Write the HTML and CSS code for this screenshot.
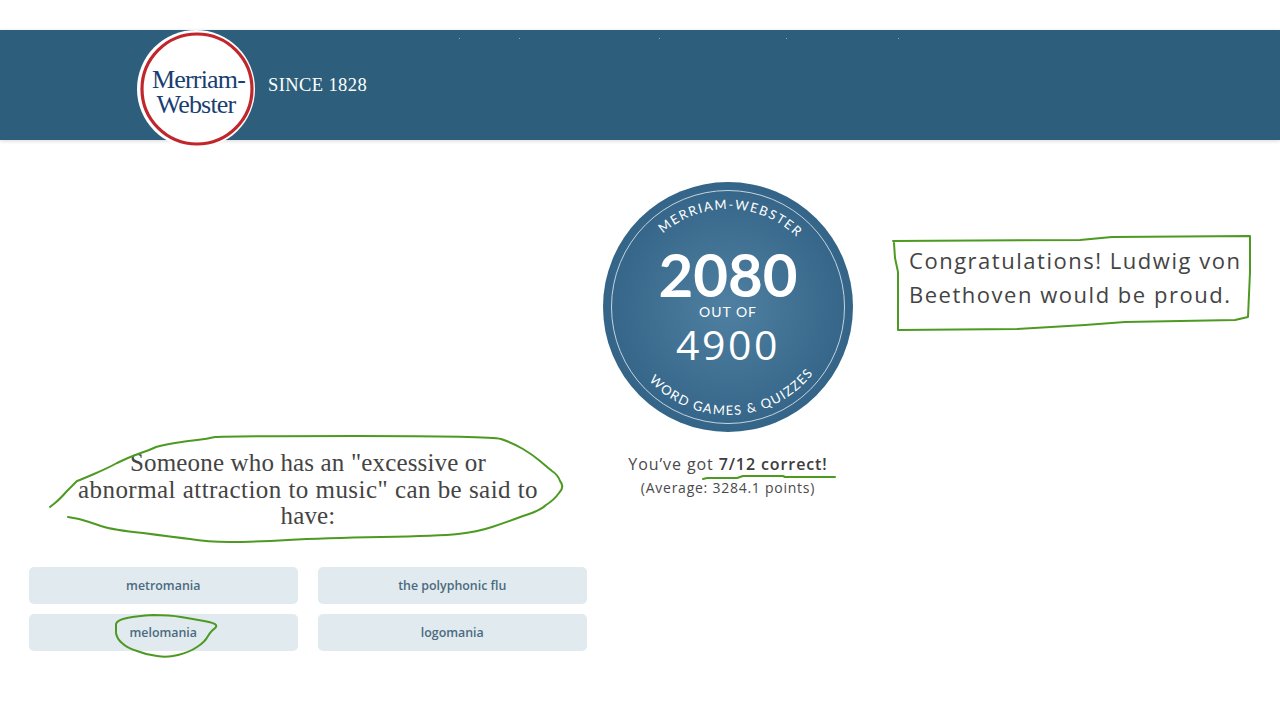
FILE: index.html
```html
<!DOCTYPE html>
<html lang="en">
<head>
<meta charset="utf-8">
<title>Merriam-Webster Quiz Result</title>
<link rel="stylesheet" href="styles.css">
</head>
<body>
<div class="site-header">
  <svg class="logo" width="120" height="120" viewBox="0 0 120 120">
    <circle cx="60" cy="60" r="59" fill="#fff"/>
    <circle cx="61" cy="60" r="55" fill="none" stroke="#c0272d" stroke-width="3.200"/>
    <text class="logo-text" x="62.500" y="59" text-anchor="middle">Merriam-</text>
    <text class="logo-text" x="60" y="84" text-anchor="middle">Webster</text>
  </svg>
  <span class="since">SINCE 1828</span>
</div>
<main class="content">
  <section class="quiz">
    <h2 class="question">Someone who has an "excessive or<br><span class="question-wide">abnormal attraction to music" can be said to</span><br>have:</h2>
    <div class="answers">
      <div class="answer">metromania</div>
      <div class="answer">the polyphonic flu</div>
      <div class="answer">melomania</div>
      <div class="answer">logomania</div>
    </div>
  </section>
  <section class="score">
    <svg class="badge" width="250" height="250" viewBox="0 0 250 250">
      <defs>
        <radialGradient id="badgeFill" cx="50%" cy="50%" r="50%">
          <stop offset="0" stop-color="#4f80a1"/>
          <stop offset="1" stop-color="#346487"/>
        </radialGradient>
        <path id="arcTop" d="M 27 125 A 98 98 0 0 1 223 125"/>
        <path id="arcBottom" d="M 17 125 A 108 108 0 0 0 233 125"/>
      </defs>
      <circle cx="125" cy="125" r="125" fill="url(#badgeFill)"/>
      <circle cx="125" cy="125" r="116.500" fill="none" stroke="#c5d5df" stroke-width="1"/>
      <text class="arc-text arc-top"><textPath href="#arcTop" startOffset="51%" text-anchor="middle">MERRIAM-WEBSTER</textPath></text>
      <text class="arc-text"><textPath href="#arcBottom" startOffset="51.500%" text-anchor="middle">WORD GAMES &amp; QUIZZES</textPath></text>
      <text class="score-num" x="125" y="115" text-anchor="middle">2080</text>
      <text class="score-of" x="125" y="135" text-anchor="middle">OUT OF</text>
      <text class="score-max" x="125" y="178" text-anchor="middle">4900</text>
    </svg>
    <p class="result">You’ve got <strong>7/12 correct!</strong></p>
    <p class="average">(Average: 3284.1 points)</p>
  </section>
  <section class="message">
    <p>Congratulations! Ludwig von Beethoven would be proud.</p>
  </section>
</main>
<svg class="marks" width="1280" height="720" viewBox="0 0 1280 720">
  <g class="specks">
    <rect x="459" y="38" width="1" height="1"/><rect x="519" y="38" width="1" height="1"/><rect x="659" y="38" width="1" height="1"/><rect x="786" y="38" width="1" height="1"/><rect x="898" y="38" width="1" height="1"/>
  </g>
  <path class="ink" d="M50 507L55 503Q60 499 67 491Q75 483 77 481Q80 480 94 474Q108 468 117 463Q127 458 138 454Q150 450 156 447Q163 445 175 443Q187 441 197 440Q207 439 215 437Q223 436 356 436Q490 436 501 439Q513 443 523 449Q533 455 540 461Q547 467 552 471Q558 475 560 481Q565 487 559 493Q554 500 546 505Q540 511 523 516Q507 522 492 527Q477 532 458 534Q440 536 381 537Q323 538 288 540Q253 542 230 542Q207 542 190 539Q173 537 143 533Q113 530 101 526Q90 522 79 519L68 517"/>
  <path class="ink" d="M893 241L1080 240L1112 237L1250 236L1250 272L1248 317L1235 320L1125 322L1085 325L1017 329L898 330L898 272L895 258L894 243"/>
  <path class="ink" d="M703 479L707 478L737 478L743 476L783 476L785 477L835 477"/>
  <path class="ink" d="M116 624Q117 620 127 618Q137 616 153 615Q170 615 181 617Q193 619 204 621Q215 623 216 625Q217 627 214 629Q212 630 208 636Q205 642 197 647Q190 652 178 655Q167 658 157 656Q147 655 137 651Q127 648 122 643Q117 639 116 633L116 624"/>
</svg>
</body>
</html>
```
FILE: styles.css
```css
* { box-sizing: border-box; }
html, body { margin: 0; height: 720px; overflow: hidden; background: #fff; }
body { position: relative; padding-top: 30px; font-family: "Open Sans", sans-serif; color: #3d3d3d; }

.site-header {
  height: 110px;
  padding-left: 136px;
  display: flex;
  align-items: flex-start;
  gap: 12px;
  background: #2d5f7c;
  box-shadow: 0 1px 4px rgba(0, 0, 0, 0.16);
}
.logo { flex: none; margin-top: -1px; }
.logo-text { font-family: "Liberation Serif", serif; font-size: 26px; letter-spacing: -0.8px; fill: #1a3e72; }
.since {
  margin-top: 44px;
  font-family: "Liberation Serif", serif;
  font-size: 18.500px;
  line-height: 22px;
  letter-spacing: 0.4px;
  color: #fff;
}

.content { display: flex; align-items: flex-start; }

.quiz { width: 558px; margin-left: 29px; padding-top: 310px; flex: none; }
.question {
  margin: 0 0 37.500px;
  font-family: "Liberation Serif", serif;
  font-size: 25px;
  font-weight: 400;
  line-height: 26.500px;
  letter-spacing: 0.15px;
  text-align: center;
  color: #444;
}
.question-wide { letter-spacing: 0.46px; }
.answers { display: grid; grid-template-columns: 268.500px 268.500px; column-gap: 20.500px; row-gap: 10px; }
.answer {
  height: 37px;
  border-radius: 5px;
  background: #e1ebef;
  font-size: 12.400px;
  font-weight: 600;
  line-height: 37px;
  text-align: center;
  color: #4c6a80;
}

.score { width: 250px; margin-left: 16px; padding-top: 42px; flex: none; text-align: center; }
.badge { display: block; }
.arc-text { font-family: Lato, sans-serif; font-size: 13px; letter-spacing: 1.400px; fill: #fff; }
.arc-top { letter-spacing: 1.550px; }
.score-num { font-family: Lato, sans-serif; font-size: 60px; font-weight: 700; fill: #fff; }
.score-of { font-family: Lato, sans-serif; font-size: 14px; letter-spacing: 1px; fill: #fff; }
.score-max { font-family: "Open Sans", sans-serif; font-size: 41px; letter-spacing: 2.500px; fill: #fff; }
.result { margin: 21px 0 0; font-size: 16px; line-height: 22px; letter-spacing: 0.9px; white-space: nowrap; color: #4a4a4a; }
.result strong { font-weight: 600; color: #3d3d3d; }
.average { margin: 4px 0 0; font-size: 14px; line-height: 18px; letter-spacing: 0.75px; white-space: nowrap; color: #4a4a4a; }

.message { width: 345px; margin-left: 56px; padding-top: 103px; flex: none; }
.message p { margin: 0; font-size: 22px; line-height: 34px; letter-spacing: 1.520px; color: #444; }

.marks { position: absolute; left: 0; top: 0; pointer-events: none; }
.specks rect { fill: #7fb0c9; }
.ink { fill: none; stroke: #4d9a22; stroke-width: 2; stroke-linejoin: round; stroke-linecap: round; }
```
